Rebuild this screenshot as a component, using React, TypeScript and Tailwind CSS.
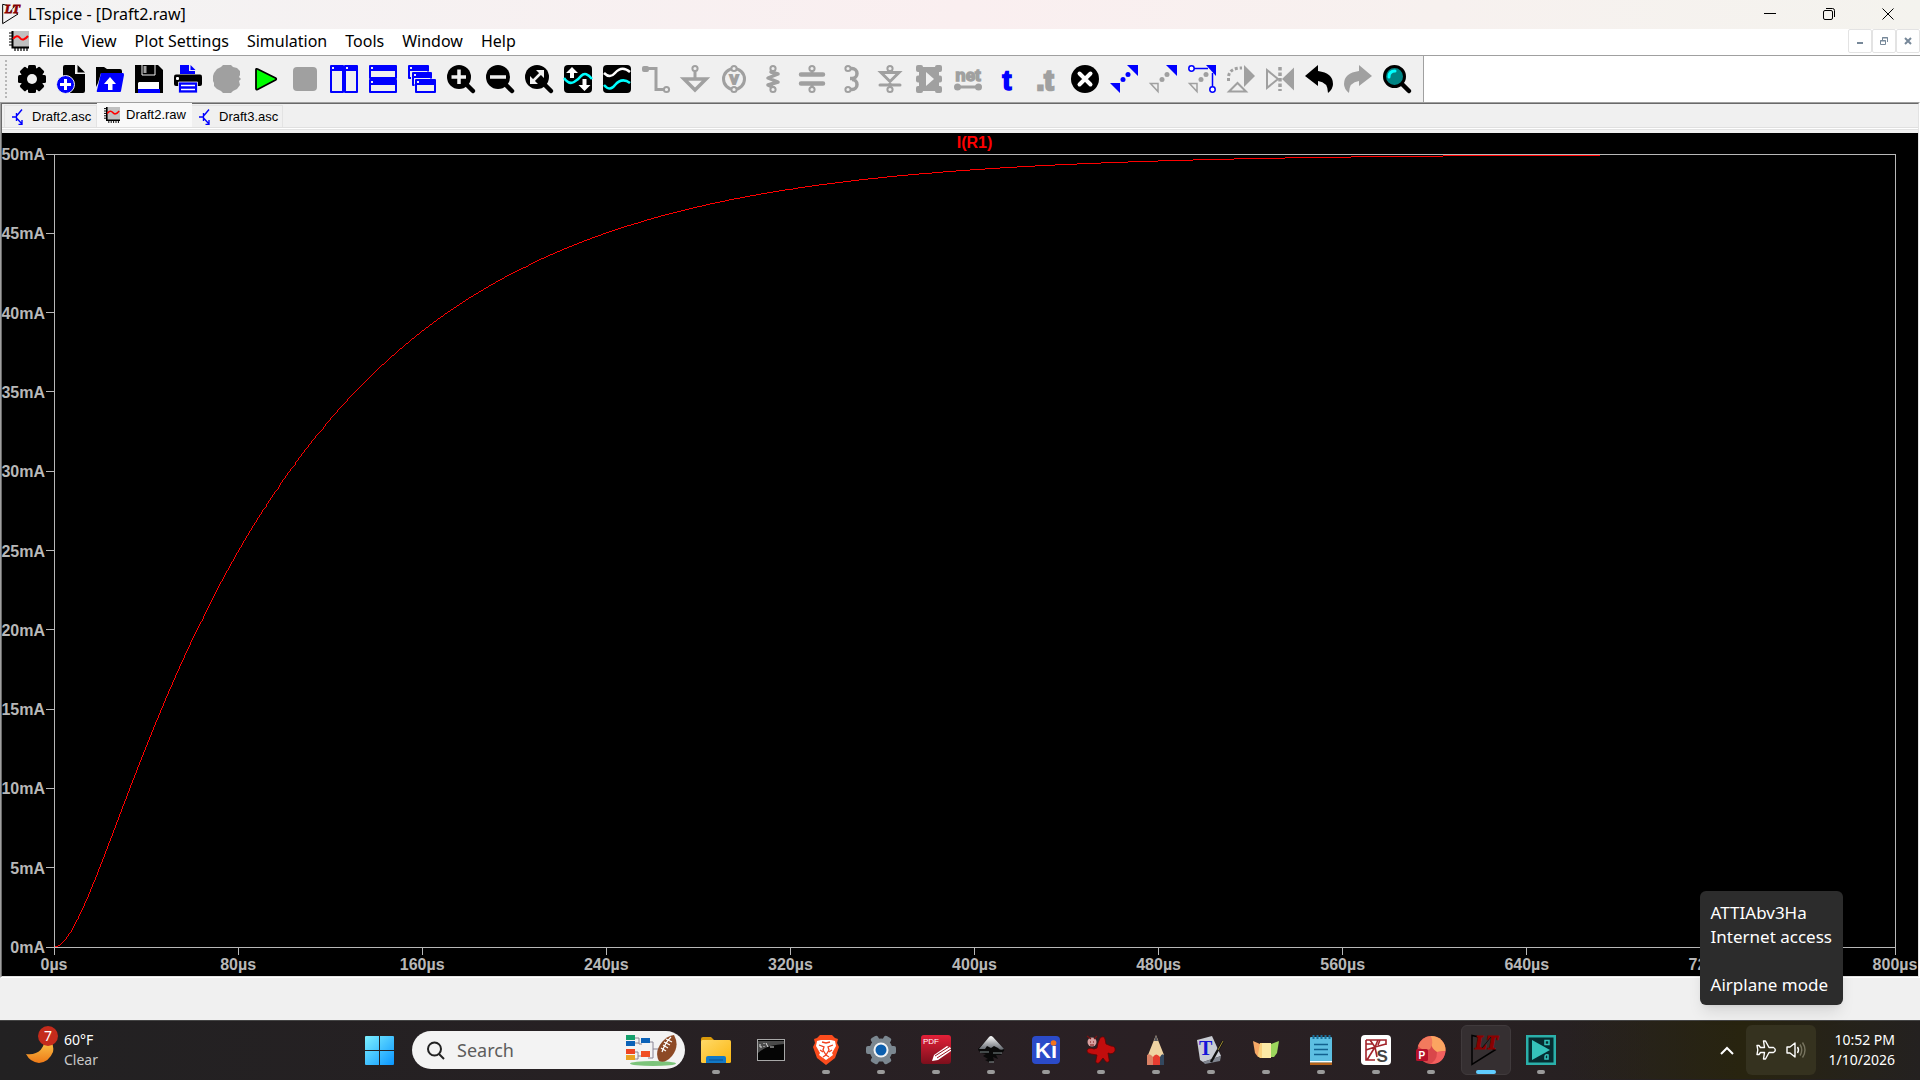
import type { ReactNode } from "react";

const GRAY = "#a0a0a0";
const BLUE = "#0000ff";
const PALE = "#f0f0f0";

/* ---------- toolbar glyphs, all on a 28 x 28 grid ---------- */

function WinBox({ x, y, w, h }: { x: number; y: number; w: number; h: number }) {
  return (
    <g>
      <rect x={x} y={y} width={w} height={h} rx="1" fill={BLUE} />
      <rect x={x + 2} y={y + 6} width={w - 4} height={h - 8} fill={PALE} />
      <rect x={x + 2} y={y + 2} width="2" height="2" fill={PALE} />
    </g>
  );
}

function Lens({ children }: { children: ReactNode }) {
  return (
    <g>
      <circle cx="12" cy="12" r="12" />
      <path d="M19 19L26 26" stroke="#000" strokeWidth="4.5" strokeLinecap="round" />
      {children}
    </g>
  );
}

function Ring({ x, y }: { x: number; y: number }) {
  return <circle cx={x} cy={y} r="2.6" fill={PALE} stroke={GRAY} strokeWidth="2" />;
}

const tools: { name: string; art: ReactNode }[] = [
  {
    name: "Settings",
    art: (
      <g>
        <circle cx="14" cy="14" r="11.5" />
        {[0, 45, 90, 135].map((a) => (
          <rect key={a} x="10" y="0" width="8" height="28" rx="1.5" transform={`rotate(${a} 14 14)`} />
        ))}
        <circle cx="14" cy="14" r="5" fill={PALE} />
      </g>
    ),
  },
  {
    name: "New",
    art: (
      <g>
        <path d="M6 2Q6 0 8 0H18V9H28V26Q28 28 26 28H8L6 20Z" />
        <path d="M20.5 0L28 7.5H20.5Z" />
        <circle cx="8.5" cy="19.5" r="9" fill={BLUE} stroke={PALE} strokeWidth="1" />
        <path d="M8.5 14V25M3 19.5H14" stroke="#fff" strokeWidth="3" />
      </g>
    ),
  },
  {
    name: "Open",
    art: (
      <g>
        <path d="M0 2H8L11 4H24Q26 4 26 6V8H5L2 18L0 22Z" />
        <path d="M5 8H27Q28 8 28 10L25 26Q25 27 24 27H2Q0 27 1 25Z" fill={BLUE} />
        <path d="M14 12L20 19H16.500V25H12V19H8Z" fill="#fff" />
      </g>
    ),
  },
  {
    name: "Save",
    art: (
      <g>
        <path d="M0 0H23L28 5V28H0Z" />
        <path d="M7 0V10H20V0" fill="none" stroke={PALE} strokeWidth="1" />
        <rect x="8.500" y="1" width="3" height="7" fill={GRAY} />
        <path d="M4 17H24V24H3V18Z" fill="#fff" />
        <rect x="3" y="24" width="22" height="4" fill={BLUE} />
      </g>
    ),
  },
  {
    name: "Print",
    art: (
      <g>
        <path d="M6 0H15V6H21V9H6Z" fill={BLUE} />
        <path d="M16.500 0L21.500 5H16.500Z" fill={BLUE} />
        <rect x="0" y="9.500" width="28" height="11.500" rx="2" />
        <rect x="2" y="12" width="3" height="3" rx="1" fill="#fff" />
        <path d="M4.500 17H23.500V28H4.500Z" fill={BLUE} stroke={PALE} strokeWidth="0.800" />
        <path d="M7 20.500H21M7 24.500H21" stroke="#fff" strokeWidth="1.600" />
      </g>
    ),
  },
  {
    name: "Configure run",
    art: (
      <path
        d="M10 0H18L20 2L24 3L27 6V10L26 12L28 14L26 16L27 20L24 24L20 26L18 28H10L8 26L4 24L1 21V18L0 16V11L1 8L4 4L8 2Z"
        fill={GRAY}
      />
    ),
  },
  {
    name: "Run",
    art: <path d="M4 4.500Q4 3.500 5.500 4L23.500 13Q25 14 23.500 15L5.500 24.500Q4 25 4 23.500Z" fill="#00ff00" stroke="#000" strokeWidth="1.800" />,
  },
  { name: "Stop", art: <rect x="2" y="2" width="24" height="24" rx="4" fill={GRAY} /> },
  {
    name: "Tile vertically",
    art: (
      <g>
        <WinBox x={0} y={0} w={14} h={28} />
        <WinBox x={14} y={0} w={14} h={28} />
      </g>
    ),
  },
  {
    name: "Tile horizontally",
    art: (
      <g>
        <WinBox x={0} y={0} w={28} h={14} />
        <WinBox x={0} y={14} w={28} h={14} />
      </g>
    ),
  },
  {
    name: "Cascade",
    art: (
      <g>
        <WinBox x={0} y={0} w={21} h={14} />
        <rect x="3" y="6.500" width="21" height="14" fill={PALE} />
        <WinBox x={4} y={7} w={20} h={14} />
        <rect x="6.500" y="13.500" width="21" height="14" fill={PALE} />
        <WinBox x={7} y={14} w={21} h={14} />
      </g>
    ),
  },
  { name: "Zoom in", art: <Lens><path d="M12 4.500V19M4.500 12H19" stroke={PALE} strokeWidth="3.500" /></Lens> },
  { name: "Zoom out", art: <Lens><path d="M4 12H20" stroke={PALE} strokeWidth="3.500" /></Lens> },
  {
    name: "Zoom to fit",
    art: (
      <Lens>
        <path d="M7 17L17 7" stroke={PALE} strokeWidth="2.500" />
        <path d="M11 5H19V13L16.500 10.500L13.500 7.500ZM5 11V19H13L10.500 16.500L7.500 13.500Z" fill={PALE} />
      </Lens>
    ),
  },
  {
    name: "Autorange",
    art: (
      <g>
        <rect width="28" height="28" rx="4" />
        <path d="M0 13Q5 20 10 17T17 11Q22 6 28 14" fill="none" stroke="#00ffff" strokeWidth="2.500" />
        <path d="M8 2L14 8H10V13H6V8H2ZM20.500 26L14.500 20H18.500V14H22.500V20H26.500Z" fill="#fff" />
      </g>
    ),
  },
  {
    name: "Plot traces",
    art: (
      <g>
        <rect width="28" height="28" rx="4" />
        <path d="M1 8Q7 14 12 8Q19 0 27 7" fill="none" stroke="#fff" strokeWidth="2.500" />
        <path d="M1 20Q7 27 12 20Q19 12 27 18" fill="none" stroke="#00ffff" strokeWidth="2.500" />
      </g>
    ),
  },
  {
    name: "Wire",
    art: (
      <g>
        <rect x="0" y="1" width="7" height="6" rx="2" fill={GRAY} />
        <path d="M5 3.500H14V24.500H22" fill="none" stroke={GRAY} strokeWidth="3" />
        <Ring x={24.500} y={24.500} />
      </g>
    ),
  },
  {
    name: "Ground",
    art: (
      <g>
        <path d="M14 4V14" stroke={GRAY} strokeWidth="3" />
        <path d="M3 14H25L14 25Z" fill={PALE} stroke={GRAY} strokeWidth="3.500" />
        <Ring x={14} y={3.500} />
      </g>
    ),
  },
  {
    name: "Voltage",
    art: (
      <g>
        <circle cx="14" cy="14" r="10.500" fill="none" stroke={GRAY} strokeWidth="3" />
        <text x="14" y="19" textAnchor="middle" fontFamily="Liberation Sans, sans-serif" fontWeight="bold" fontSize="13" fill={GRAY} stroke={GRAY} strokeWidth="2">V</text>
        <Ring x={14} y={3.500} />
        <Ring x={14} y={24.500} />
      </g>
    ),
  },
  {
    name: "Resistor",
    art: (
      <g>
        <path d="M14 3L12 7L19 9L9 13L19 17L9 20L15 23" fill="none" stroke={GRAY} strokeWidth="3.500" strokeLinejoin="round" strokeLinecap="round" />
        <Ring x={14} y={3.500} />
        <Ring x={14} y={24.500} />
      </g>
    ),
  },
  {
    name: "Capacitor",
    art: (
      <g>
        <path d="M14 4V9M14 19V24" stroke={GRAY} strokeWidth="3" />
        <path d="M3 9.500H25M3 18.500H25" stroke={GRAY} strokeWidth="4.500" strokeLinecap="round" />
        <Ring x={14} y={3.500} />
        <Ring x={14} y={24.500} />
      </g>
    ),
  },
  {
    name: "Inductor",
    art: (
      <g>
        <path d="M12 3.500H15A5 5 0 0 1 15 13.500H13M15 14.500A5 5 0 0 1 15 24.500H12" fill="none" stroke={GRAY} strokeWidth="3.500" />
        <Ring x={11} y={3.500} />
        <Ring x={11} y={24.500} />
      </g>
    ),
  },
  {
    name: "Diode",
    art: (
      <g>
        <path d="M14 4V8M14 18V24" stroke={GRAY} strokeWidth="3" />
        <path d="M5 7.500H23L14 16.500Z" fill={PALE} stroke={GRAY} strokeWidth="3" />
        <path d="M4 20H24" stroke={GRAY} strokeWidth="3" strokeLinecap="round" />
        <Ring x={14} y={3.500} />
        <Ring x={14} y={24.500} />
      </g>
    ),
  },
  {
    name: "Component",
    art: (
      <g fill={GRAY}>
        <rect x="4" y="2" width="20" height="24" />
        {[0, 10.500, 21].map((y) => (
          <g key={y}>
            <rect x="1" y={y} width="7" height="7" rx="2" />
            <rect x="20" y={y} width="7" height="7" rx="2" />
          </g>
        ))}
        <path d="M11 7V21L19 14Z" fill={PALE} />
      </g>
    ),
  },
  {
    name: "Net label",
    art: (
      <g fill={GRAY}>
        <text x="14" y="16" textAnchor="middle" fontFamily="Liberation Sans, sans-serif" fontWeight="bold" fontSize="17" stroke={GRAY} strokeWidth="1.500">net</text>
        <path d="M4 22H24" stroke={GRAY} strokeWidth="3" />
        <circle cx="3.500" cy="22" r="3.500" />
        <circle cx="24.500" cy="22" r="3.500" />
      </g>
    ),
  },
  {
    name: "Text",
    art: <text x="14" y="25" textAnchor="middle" fontFamily="Liberation Sans, sans-serif" fontWeight="bold" fontSize="28" fill={BLUE} stroke={BLUE} strokeWidth="1.500">t</text>,
  },
  {
    name: "SPICE directive",
    art: <text x="13" y="25" textAnchor="middle" fontFamily="Liberation Sans, sans-serif" fontWeight="bold" fontSize="28" fill={GRAY} stroke={GRAY} strokeWidth="2.500">.t</text>,
  },
  {
    name: "Delete",
    art: (
      <g>
        <circle cx="14" cy="14" r="14" />
        <path d="M8.500 8.500L19.500 19.500M19.500 8.500L8.500 19.500" stroke="#fff" strokeWidth="4" strokeLinecap="round" />
      </g>
    ),
  },
  {
    name: "Move",
    art: (
      <g fill={BLUE}>
        <path d="M17 0H28V11ZM0 18H10V28Z" />
        <circle cx="13" cy="14.500" r="2.500" />
        <circle cx="18" cy="9.500" r="2.500" />
      </g>
    ),
  },
  {
    name: "Copy",
    art: (
      <g fill={GRAY}>
        <path d="M17 0H28V11Z" fill={BLUE} />
        <path d="M1.500 18.500H9V26.500Z" fill="none" stroke={GRAY} strokeWidth="1.500" />
        <circle cx="13" cy="14.500" r="2.500" />
        <circle cx="18" cy="9.500" r="2.500" />
      </g>
    ),
  },
  {
    name: "Drag",
    art: (
      <g fill={GRAY}>
        <path d="M18 0H28V11Z" fill={BLUE} />
        <path d="M1.500 18.500H9V26.500Z" fill="none" stroke={GRAY} strokeWidth="1.500" />
        <circle cx="13" cy="14.500" r="2.500" />
        <circle cx="18" cy="9.500" r="2.500" />
        <path d="M6 3.500H20M24.500 8V22" stroke={BLUE} strokeWidth="1.500" />
        <circle cx="3.500" cy="3.500" r="2.700" fill="#fff" stroke={BLUE} strokeWidth="1.500" />
        <circle cx="24.500" cy="24.500" r="2.700" fill="#fff" stroke={BLUE} strokeWidth="1.500" />
      </g>
    ),
  },
  {
    name: "Rotate",
    art: (
      <g>
        <path d="M17 0L28 11L17 22Z" fill={GRAY} />
        <path d="M1.500 16V12Q2 3 15 3" fill="none" stroke={GRAY} strokeWidth="3" strokeDasharray="3 2" />
        <path d="M2 26.500L10.500 18L19 26.500Z" fill={PALE} stroke={GRAY} strokeWidth="2" />
      </g>
    ),
  },
  {
    name: "Mirror",
    art: (
      <g>
        <path d="M14 2V26" stroke={GRAY} strokeWidth="3.500" strokeDasharray="3.500 2" />
        <path d="M28 2.500V25.500L16 14Z" fill={GRAY} />
        <path d="M1 5V23L12 14Z" fill={PALE} stroke={GRAY} strokeWidth="2" />
      </g>
    ),
  },
  { name: "Undo", art: <path d="M0 11L13 0V6Q28 8 28 19Q28 24 23 28Q23 17 13 16V21Z" /> },
  { name: "Redo", art: <path d="M28 11L15 0V6Q0 8 0 19Q0 24 5 28Q5 17 15 16V21Z" fill={GRAY} /> },
  {
    name: "Search",
    art: (
      <g>
        <circle cx="11.500" cy="11.500" r="10" fill="#008484" stroke="#000" strokeWidth="3" />
        <path d="M6 12Q6 6 12 6" fill="none" stroke="#00ffff" strokeWidth="3" strokeLinecap="round" />
        <path d="M20 20L26 26" stroke="#000" strokeWidth="4.500" strokeLinecap="round" />
      </g>
    ),
  },
];

/* ---------- shared small artwork ---------- */

function LtLogo({ size }: { size: number }) {
  return (
    <svg width={size} height={size} viewBox="0 0 30 30" className="overflow-visible" aria-hidden="true">
      <path d="M8 2L1 0.500V29.500L24 15L19 12" fill="none" stroke="#000" strokeWidth="1.500" />
      <text x="4" y="14" fontFamily="Liberation Serif, serif" fontWeight="bold" fontStyle="italic" fontSize="19" fill="#8b0000" stroke="#8b0000" strokeWidth="1.200">LT</text>
      <path d="M11 13L20 2" stroke="#111" strokeWidth="1" />
    </svg>
  );
}

function WaveIcon({ size }: { size: number }) {
  return (
    <svg width={size} height={size} viewBox="0 0 20 20" aria-hidden="true">
      <rect x="3" width="17" height="17" fill="#c0c0c0" />
      <path d="M3.500 0V16.500H20" fill="none" stroke="#000" strokeWidth="2" />
      <path d="M0 2H3M0 5H3M0 8H3M0 11H3M0 14H3M6 17V20M9 17V20M12 17V20M15 17V20M18 17V20" stroke="#000" strokeWidth="1.200" />
      <path d="M4 8Q8 3 11 7T19 5" fill="none" stroke="#ff0000" strokeWidth="2" />
    </svg>
  );
}

function TransistorIcon() {
  return (
    <svg width="12" height="16" viewBox="0 0 12 16" aria-hidden="true">
      <path d="M0 8H4M4.500 4V12M5 6.500L10 0.500M5 9.500L10 15M10 11V15.500H6.500" fill="none" stroke={BLUE} strokeWidth="1.400" />
    </svg>
  );
}

/* ---------- chart ---------- */

const SAMPLES = 400;
const TAU_SLOW = 99;
const TAU_FAST = 11;
const points = Array.from({ length: SAMPLES + 1 }, (_, i) => {
  const u = i / SAMPLES;
  const t = 800 * u * u;
  const rest = (TAU_SLOW * Math.exp(-t / TAU_SLOW) - TAU_FAST * Math.exp(-t / TAU_FAST)) / (TAU_SLOW - TAU_FAST);
  return `${((t / 800) * 1000).toFixed(2)},${(rest * 1000).toFixed(2)}`;
}).join(" ");

const ticks = Array.from({ length: 11 }, (_, i) => i);

function Chart() {
  return (
    <div className="flex min-h-0 flex-1 bg-black pt-[21px] pr-[23px] pb-[29px] pl-[52px]">
      <svg
        className="h-auto min-h-0 w-full flex-1 overflow-visible"
        role="img"
        aria-label="I(R1) against time"
        fontFamily="Liberation Sans, Arial, sans-serif"
        fontSize="16"
        fontWeight="bold"
        fill="#b8b8b8"
      >
        <text x="50%" y="-6" textAnchor="middle" fill="#ff0000">I(R1)</text>
        <svg x="0" y="0" width="100%" height="100%" viewBox="0 0 1000 1000" preserveAspectRatio="none" overflow="visible">
          <polyline points={points} fill="none" stroke="#ff0000" strokeWidth="1" vectorEffect="non-scaling-stroke" shapeRendering="crispEdges" />
        </svg>
        <g stroke="#b8b8b8" strokeWidth="1" shapeRendering="crispEdges">
          <rect x="0" y="0" width="100%" height="100%" fill="none" />
          {ticks.map((i) => (
            <g key={i}>
              <line x1="-8" x2="0" y1={`${i * 10}%`} y2={`${i * 10}%`} />
              <svg x={`${i * 10}%`} y="100%" overflow="visible">
                <line x1="0" x2="0" y1="0" y2="8" />
              </svg>
            </g>
          ))}
        </g>
        {ticks.map((i) => (
          <g key={i}>
            <svg x="0" y={`${i * 10}%`} overflow="visible">
              <text x="-9" y="6" textAnchor="end">{`${50 - i * 5}mA`}</text>
            </svg>
            <svg x={`${i * 10}%`} y="100%" overflow="visible">
              <text x="0" y="23" textAnchor="middle">{`${i * 80}µs`}</text>
            </svg>
          </g>
        ))}
      </svg>
    </div>
  );
}

/* ---------- taskbar artwork, 30 x 30 ---------- */

const apps: { name: string; state: "none" | "open" | "active"; art: ReactNode }[] = [
  {
    name: "File Explorer",
    state: "open",
    art: (
      <g>
        <path d="M0 4Q0 2 2 2H10L13 5V12H0Z" fill="#d99a0b" />
        <rect x="0" y="5" width="30" height="23" rx="1.500" fill="url(#folder)" />
        <path d="M5 28V23Q5 21 7 21H23Q25 21 25 23V28Z" fill="#1279c6" />
        <path d="M8 25H22" stroke="#0a4f8f" />
      </g>
    ),
  },
  {
    name: "Terminal",
    state: "none",
    art: (
      <g>
        <rect x="1.500" y="4.500" width="27" height="21" fill="#050505" stroke="#a8a8a8" />
        <path d="M2 6H28V9Q10 10 2 18Z" fill="#4a4a4a" />
        <path d="M4 9V12H6M8 8V9M8 11V12M10 8L12 12M14 12H18" stroke="#ddd" fill="none" />
      </g>
    ),
  },
  {
    name: "Brave",
    state: "open",
    art: (
      <g>
        <path d="M9 0H21L24 3L27 4L26 8L28 12L24 23L15 30L6 23L2 12L4 8L3 4L6 3Z" fill="#fb4c1d" />
        <path d="M10 5H20L24 6L25 11L21 18L22 20L15 25L8 20L9 18L5 11L6 6Z" fill="#fff" />
        <path d="M8 10L13 12L12 15L15 20L18 15L17 12L22 10M12 22L15 20L18 22M11 7L15 8L19 7M9 15L12 17M21 15L18 17" fill="none" stroke="#f0421f" strokeWidth="1.300" />
      </g>
    ),
  },
  {
    name: "Settings",
    state: "open",
    art: (
      <g>
        <circle cx="15" cy="15" r="11.500" fill="#7b8790" />
        {[30, 90, 150].map((a) => (
          <rect key={a} x="11" y="0" width="8" height="30" rx="2" fill="#7b8790" transform={`rotate(${a} 15 15)`} />
        ))}
        <circle cx="15" cy="15" r="7.500" fill="#f2f4f5" />
        <circle cx="15" cy="15" r="5.500" fill="#0c5fae" />
      </g>
    ),
  },
  {
    name: "PDF editor",
    state: "open",
    art: (
      <g>
        <rect width="30" height="29" rx="3" fill="url(#pdf)" />
        <text x="2" y="9" fontFamily="Liberation Sans, sans-serif" fontSize="8" fill="#fff">PDF</text>
        <path d="M11 26L13 20L26 11L30 13V16L17 25Z" fill="#fff" />
        <path d="M14 21L28 12M16 23L30 14" stroke="#9b1220" strokeWidth="1" />
      </g>
    ),
  },
  {
    name: "Inkscape",
    state: "open",
    art: (
      <g>
        <path d="M13 2Q15 0 17 2L28 14Q29 17 24 18L26 20L20 20L22 24L17 22L18 26L13 27L9 25L12 24L7 21L10 19L5 18L2 15Q2 13 4 12Z" fill="#0a0a0a" />
        <path d="M13 2Q15 0 17 2L28 14Q24 16 22 13L18 11L15 13L11 11L9 14L3 14Z" fill="url(#steel)" />
        <path d="M4 17H13M17 18H26M13 27H18" stroke="#9aa" strokeWidth="0.800" />
      </g>
    ),
  },
  {
    name: "KiCad",
    state: "open",
    art: (
      <g>
        <rect x="1" y="1" width="28" height="28" rx="4" fill="#2b4bc9" />
        <text x="4" y="23" fontFamily="Liberation Sans, sans-serif" fontWeight="bold" fontSize="22" fill="#fff">Ki</text>
        <circle cx="22.500" cy="8" r="2.800" fill="#f4731c" />
      </g>
    ),
  },
  {
    name: "Puzzle",
    state: "open",
    art: (
      <g>
        <path d="M12 8L14 3Q18 0 19 4L20 9L25 11Q30 11 29 16Q27 20 22 18L23 24Q24 28 20 27L17 23L13 28Q9 29 10 25L11 20L5 19Q0 18 1 15Q3 12 8 14L11 13Z" fill="#c20d0d" stroke="#5c0505" strokeWidth="0.800" />
        <circle cx="6" cy="7" r="4.500" fill="#d7a0a0" />
        <path d="M1 1L5 4M11 1L8 4M4 7H5M7 7H8M4 10H8" stroke="#7a1111" strokeWidth="1.200" />
      </g>
    ),
  },
  {
    name: "Pencil",
    state: "open",
    art: (
      <g>
        <path d="M15 0L23 20V30H7V20Z" fill="#efd3a3" />
        <path d="M15 0L17 6H13Z" fill="#55565e" />
        <path d="M6 20Q9 18 12 22V30H6Z" fill="#d98064" />
        <path d="M12 22Q15 17 19 22V30H12Z" fill="#e63b30" />
        <path d="M19 22Q21 18 23 20V30H19Z" fill="#33485f" />
      </g>
    ),
  },
  {
    name: "Text editor",
    state: "open",
    art: (
      <g>
        <path d="M1 5L16 1L25 21L7 27L4 25Z" fill="#c9ccd4" />
        <path d="M7 27L25 21L24 26L9 29Z" fill="#808590" />
        <text x="3" y="20" fontFamily="Liberation Serif, serif" fontWeight="bold" fontSize="20" fill="#1515d8">T</text>
        <path d="M27 6L15 27" stroke="#111" strokeWidth="2.500" />
        <path d="M27 6L22 15" stroke="#a08a30" strokeWidth="1" />
      </g>
    ),
  },
  {
    name: "Cat",
    state: "open",
    art: (
      <g>
        <path d="M2 6L9 9V22H7L4 18Z" fill="#f6a866" />
        <path d="M9 8H15V23H9Q7 22 7 20Z" fill="#f8d27e" />
        <path d="M11 8H20V23H11Z" fill="#fbeaa6" />
        <path d="M20 9L28 6L26 18L23 22H20Z" fill="#9cd65c" />
      </g>
    ),
  },
  {
    name: "Notepad",
    state: "open",
    art: (
      <g>
        <rect x="4" y="2" width="22" height="27" rx="1" fill="#5dbfe2" />
        <rect x="4" y="26" width="22" height="1.500" fill="#fff" />
        <rect x="4" y="27.500" width="22" height="2.500" fill="#b8651b" />
        <path d="M7.500 0V4M11.500 0V4M15.500 0V4M19.500 0V4M23.500 0V4" stroke="#1b6e9a" strokeWidth="2" />
        <path d="M8 9.500H22M8 14.500H22M8 19.500H22" stroke="#12618f" strokeWidth="1.600" />
      </g>
    ),
  },
  {
    name: "KS",
    state: "open",
    art: (
      <g>
        <rect width="30" height="30" rx="4" fill="#fff" />
        <path d="M5 5H25V10M5 5V25H14M5 15L14 12L25 9M9 5L14 12L6 25M17 5L14 12L16 22M5 9H12M19 5L17 10" fill="none" stroke="#a3232b" strokeWidth="1.600" />
        <text x="15.500" y="26.500" fontFamily="Liberation Sans, sans-serif" fontWeight="bold" fontSize="17" fill="#444">S</text>
      </g>
    ),
  },
  {
    name: "PowerPoint",
    state: "open",
    art: (
      <g>
        <circle cx="15.500" cy="15" r="14" fill="#d9474a" />
        <path d="M15 1A14 14 0 0 1 29.500 16L21 17Q15 13 15 8Z" fill="#fba561" />
        <path d="M15 1A14 14 0 0 0 2 11Q8 17 14 14Q18 9 15 1Z" fill="#f27a5d" />
        <path d="M13 29Q21 27 21 17L29.500 16Q28 29 15 29Z" fill="#f2605f" />
        <rect x="0" y="14" width="12" height="12" rx="1.500" fill="#b5102a" />
        <text x="2.500" y="23.500" fontFamily="Liberation Sans, sans-serif" fontWeight="bold" fontSize="10" fill="#fff">P</text>
      </g>
    ),
  },
  { name: "LTspice", state: "active", art: null },
  {
    name: "Filmora",
    state: "open",
    art: (
      <g>
        <rect width="30" height="30" fill="#2bb0aa" />
        <rect x="2.500" y="2.500" width="25" height="25" fill="#062c30" />
        <path d="M6 5L24 15L6 25Z" fill="#35c3bb" />
        <rect x="19" y="5.500" width="4" height="4" fill="none" stroke="#35c3bb" strokeWidth="1.500" />
        <path d="M19 22Q19 19 22 20V24H19Z" fill="none" stroke="#35c3bb" strokeWidth="1.500" />
      </g>
    ),
  },
];

function SearchArt() {
  return (
    <svg width="52" height="32" viewBox="0 0 52 32" aria-hidden="true">
      <ellipse cx="28" cy="29.500" rx="23" ry="2.500" fill="#7cc47a" />
      <path d="M10 4H14V10H17M10 9H14M24 8H28V24H23M28 15H33M10 18H13V22H16M10 25H13V22" fill="none" stroke="#8a8494" />
      <rect x="1" y="1" width="9" height="5" fill="#14a06c" />
      <rect x="1" y="7" width="9" height="5" fill="#0b62b8" />
      <rect x="16" y="4" width="9" height="5" fill="#0b62b8" />
      <rect x="1" y="15" width="9" height="5" fill="#ee4423" />
      <rect x="1" y="21" width="9" height="5" fill="#e9a222" />
      <rect x="16" y="17" width="9" height="6" fill="#f04e23" />
      <path d="M49 1Q55 12 47 22Q40 30 34 27Q29 18 37 8Q42 2 49 1Z" fill="#8d4a26" />
      <path d="M46 3Q40 9 37 18" stroke="#fff" strokeWidth="1.200" fill="none" />
      <path d="M41 5L47 8M39 8L45 11M38 11L43 14M36 14L41 17" stroke="#fff" strokeWidth="1.200" />
    </svg>
  );
}

const menus = ["File", "View", "Plot Settings", "Simulation", "Tools", "Window", "Help"];

function Indicator({ state }: { state: "none" | "open" | "active" }) {
  if (state === "none") return <span className="h-1" />;
  if (state === "active") return <span className="h-1 w-5 rounded-full bg-[#60cdff]" />;
  return <span className="h-1 w-2 rounded-full bg-[#9a9a9a]" />;
}

export default function App() {
  return (
    <div className="relative flex h-screen flex-col overflow-hidden bg-[#f0f0f0] font-['Noto_Sans',sans-serif] text-black">
      <header className="flex h-[29px] shrink-0 items-center bg-linear-to-r from-[#f3f3f3] via-[#faeff0] to-[#f4f3ee] pr-[3px] pb-px pl-0.5">
        <LtLogo size={20} />
        <h1 className="ml-1.5 text-base leading-5">LTspice - [Draft2.raw]</h1>
        <div className="ml-auto flex">
          <button aria-label="Minimize" className="flex h-7 w-[59px] items-center justify-center">
            <svg width="12" height="12" viewBox="0 0 12 12"><path d="M0 5.500H12" stroke="#000" /></svg>
          </button>
          <button aria-label="Restore" className="flex h-7 w-[59px] items-center justify-center">
            <svg width="12" height="12" viewBox="0 0 12 12" fill="none" stroke="#000">
              <rect x="0.500" y="2.500" width="9" height="9" rx="1.500" />
              <path d="M3 0.500H9.500Q11.500 0.500 11.500 2.500V9" />
            </svg>
          </button>
          <button aria-label="Close" className="flex h-7 w-[59px] items-center justify-center">
            <svg width="12" height="12" viewBox="0 0 12 12"><path d="M0.500 0.500L11.500 11.500M11.500 0.500L0.500 11.500" stroke="#000" /></svg>
          </button>
        </div>
      </header>

      <nav className="flex h-[27px] shrink-0 items-center border-b border-[#a0a0a0] bg-white pb-0.5 pl-[9px]" aria-label="Main menu">
        <WaveIcon size={20} />
        <div className="flex">
          {menus.map((m) => (
            <button key={m} className="px-[9px] text-base leading-6">{m}</button>
          ))}
        </div>
        <div className="ml-auto flex">
          <button aria-label="Minimize document" className="flex size-6 items-center justify-center rounded-xs border border-[#e3e3e3] text-[#778899]">
            <svg width="8" height="8" viewBox="0 0 8 8"><path d="M1 6H7" stroke="currentColor" strokeWidth="2" /></svg>
          </button>
          <button aria-label="Restore document" className="flex size-6 items-center justify-center rounded-xs border border-[#e3e3e3] text-[#778899]">
            <svg width="8" height="8" viewBox="0 0 8 8" fill="none" stroke="currentColor"><path d="M0.500 3.500H5.500V7.500H0.500ZM0 4H6M2.500 3V0.500H7.500V5M2 1H8" /></svg>
          </button>
          <button aria-label="Close document" className="flex size-6 items-center justify-center rounded-xs border border-[#e3e3e3] text-[#778899]">
            <svg width="8" height="8" viewBox="0 0 8 8"><path d="M1 1L7 7M7 1L1 7" stroke="currentColor" strokeWidth="2" /></svg>
          </button>
        </div>
      </nav>

      <div className="flex h-[46px] shrink-0 bg-white">
        <div className="flex items-center border-r border-[#a0a0a0] bg-[#f0f0f0] pr-3 pl-[5px]" role="toolbar" aria-label="Tools">
          <div className="mr-[11px] h-[38px] border-l-2 border-dotted border-[#b8b8b8]" />
          <div className="flex gap-[11px]">
            {tools.map((t) => (
              <button key={t.name} aria-label={t.name} className="size-7">
                <svg width="28" height="28" viewBox="0 0 28 28" className="overflow-visible">{t.art}</svg>
              </button>
            ))}
          </div>
        </div>
      </div>

      <main className="flex min-h-0 flex-1 flex-col border border-t-[#a0a0a0] border-r-white border-b-white border-l-[#a0a0a0]">
        <div className="flex min-h-0 flex-1 flex-col border border-t-[#696969] border-r-[#e3e3e3] border-b-[#e3e3e3] border-l-[#696969]">
          <div className="h-[29px] shrink-0">
            <div className="flex h-6 items-end border-b border-[#e0e0e0] pl-0.5 font-['Liberation_Sans',sans-serif] text-[13px] leading-4" role="tablist">
              <button role="tab" aria-selected="false" className="flex h-[22px] w-[93px] items-center gap-2 border-x border-t border-[#e3e3e3] pt-px pl-[7px]">
                <TransistorIcon />
                Draft2.asc
              </button>
              <button role="tab" aria-selected="true" className="flex h-6 w-[95px] items-center gap-1.5 bg-[#f9f9f9] pb-px pl-[7px]">
                <WaveIcon size={16} />
                Draft2.raw
              </button>
              <button role="tab" aria-selected="false" className="flex h-[22px] w-[91px] items-center gap-2 border-r border-t border-[#e3e3e3] pt-px pl-[7px]">
                <TransistorIcon />
                Draft3.asc
              </button>
            </div>
            <div className="h-0.5 border-b border-[#e3e3e3] bg-white" />
          </div>
          <Chart />
        </div>
      </main>

      <div className="h-[42px] shrink-0" role="status" />

      <footer className="flex h-[60px] shrink-0 items-stretch border-t border-[#444] bg-linear-to-r from-[#222122] via-[#2a2024] via-60% to-[#242120] pb-px text-white">
        <div className="flex flex-1 items-center gap-2.5 pl-[26px]">
          <div className="relative">
            <svg width="28" height="28" viewBox="0 0 28 28" aria-hidden="true">
              <path d="M19 1Q29 6 27 16Q23 26 13 27Q4 26 0 18Q18 20 19 1Z" fill="url(#moon)" />
            </svg>
            <span className="absolute -top-2.5 left-3 flex size-5 items-center justify-center rounded-full bg-[#c42b1c] text-sm leading-5">7</span>
          </div>
          <div className="pb-px text-sm leading-5">
            <div>60°F</div>
            <div className="text-[#c8c8c8]">Clear</div>
          </div>
        </div>

        <div className="flex items-center">
          <button aria-label="Start" className="flex h-[50px] w-[49px] items-center justify-center">
            <svg width="29" height="29" viewBox="0 0 29 29" fill="url(#win)">
              <path d="M0 1Q0 0 1 0H14V14H0ZM15 0H28Q29 0 29 1V14H15ZM0 15H14V29H1Q0 29 0 28ZM15 15H29V28Q29 29 28 29H15Z" />
            </svg>
          </button>
          <label className="mr-1.5 ml-2 flex h-[38px] w-[273px] items-center rounded-full bg-[#f3f3f3] pr-2 pl-[15px]">
            <svg width="18" height="19" viewBox="0 0 18 19" fill="none" stroke="#222" strokeWidth="2" aria-hidden="true">
              <circle cx="7.500" cy="8" r="6.500" />
              <path d="M12 13L17 18" />
            </svg>
            <input aria-label="Search" placeholder="Search" className="ml-3 w-0 min-w-0 flex-1 bg-transparent text-lg leading-6 text-black outline-none placeholder:text-[#5c5c5c]" />
            <SearchArt />
          </label>
          <div className="flex gap-[5px]">
            {apps.map((a) => (
              <button
                key={a.name}
                aria-label={a.name}
                className={
                  a.state === "active"
                    ? "flex size-[50px] flex-col items-center justify-between rounded-md border border-[#403a3c] bg-[#352f31] pt-[9px]"
                    : "flex size-[50px] flex-col items-center justify-between pt-2.5 pb-px"
                }
              >
                {a.art ? <svg width="30" height="30" viewBox="0 0 30 30">{a.art}</svg> : <LtLogo size={30} />}
                <Indicator state={a.state} />
              </button>
            ))}
          </div>
        </div>

        <div className="flex flex-1 items-center justify-end bg-linear-to-r from-transparent via-[#28240f] via-50% to-[#242120] pr-[25px]">
          <button aria-label="Show hidden icons" className="mr-3 flex h-[50px] w-[14px] items-center">
            <svg width="14" height="9" viewBox="0 0 14 9"><path d="M1 8L7 2L13 8" fill="none" stroke="#fff" strokeWidth="2" /></svg>
          </button>
          <button aria-label="Network and volume" className="flex h-[50px] w-[70px] items-center justify-center gap-2.5 rounded-md bg-[#35321f]">
            <svg width="20" height="20" viewBox="0 0 20 20" fill="none" stroke="#fff" strokeWidth="1.400" strokeLinejoin="round">
              <path d="M7.500 1H9.500L13 7.500H17.500Q19.300 8.500 19.300 10T17.500 12.500H13L9.500 19H7.500L8.500 12.500H4.500L3 14.500H1L1.800 10L1 5.500H3L4.500 7.500H8.500Z" />
            </svg>
            <svg width="20" height="18" viewBox="0 0 20 18" fill="none" stroke="#fff" strokeWidth="1.400" strokeLinejoin="round">
              <path d="M1 6H4L9 2V16L4 12H1Z" />
              <path d="M11.500 6Q13.500 9 11.500 12" />
              <path d="M14 3.500Q17.500 9 14 14.500M16.500 1.500Q21.500 9 16.500 16.500" stroke="#77745f" />
            </svg>
          </button>
          <div className="ml-[13px] pb-px text-right text-sm leading-5">
            <div>10:52 PM</div>
            <div>1/10/2026</div>
          </div>
        </div>
      </footer>

      <div role="tooltip" className="absolute right-[77px] bottom-[75px] rounded-md bg-[#2c2c2c] px-[11px] pt-2.5 pb-2 text-[17px] leading-6 text-white shadow-lg">
        <div>ATTIAbv3Ha</div>
        <div>Internet access</div>
        <div className="mt-6">Airplane mode</div>
      </div>

      <svg width="0" height="0" className="absolute" aria-hidden="true">
        <defs>
          <linearGradient id="win" x1="0" y1="0" x2="1" y2="1">
            <stop offset="0" stopColor="#7df0ff" />
            <stop offset="1" stopColor="#0a96ff" />
          </linearGradient>
          <linearGradient id="moon" x1="0" y1="0" x2="0" y2="1">
            <stop offset="0.300" stopColor="#f8b840" />
            <stop offset="1" stopColor="#ee7a18" />
          </linearGradient>
          <linearGradient id="folder" x1="0" y1="0" x2="1" y2="1">
            <stop offset="0" stopColor="#ffd968" />
            <stop offset="1" stopColor="#fbb60f" />
          </linearGradient>
          <linearGradient id="pdf" x1="0" y1="0" x2="0" y2="1">
            <stop offset="0" stopColor="#e32038" />
            <stop offset="1" stopColor="#7c0f1c" />
          </linearGradient>
          <linearGradient id="steel" x1="0" y1="0" x2="0" y2="1">
            <stop offset="0" stopColor="#ffffff" />
            <stop offset="1" stopColor="#60656c" />
          </linearGradient>
        </defs>
      </svg>
    </div>
  );
}
